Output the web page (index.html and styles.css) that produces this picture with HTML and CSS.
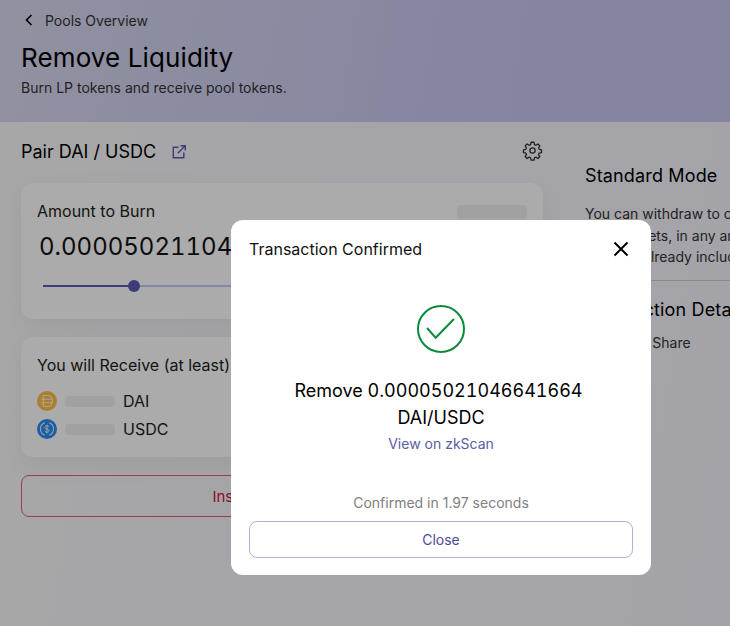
FILE: index.html
```html
<!DOCTYPE html>
<html lang="en">
<head>
<meta charset="utf-8">
<title>Remove Liquidity</title>
<link rel="stylesheet" href="styles.css">
</head>
<body>
<div class="page">
  <header class="hero">
    <a class="back">
      <svg width="16" height="16" viewBox="0 0 16 16" fill="none" stroke="#000" stroke-width="1.6"><path d="M10.500 3 5.500 8l5 5"/></svg>
      <span>Pools Overview</span>
    </a>
    <h1>Remove Liquidity</h1>
    <p>Burn LP tokens and receive pool tokens.</p>
  </header>
  <main class="columns">
    <section class="left">
      <div class="pair-row">
        <div class="pair-title">
          <h2>Pair DAI / USDC</h2>
          <svg class="ext" width="16" height="16" viewBox="0 0 16 16" fill="none" stroke="#5a5ab0" stroke-width="1.4"><path d="M7.500 3.200H2.300v10.500h10.500V8.500"/><path d="M6.800 9.200 14.200 1.800M9.600 1.700h4.700v4.700"/></svg>
        </div>
        <svg class="gear" width="21" height="21" viewBox="0 0 24 24" fill="none" stroke="#333" stroke-width="1.500" stroke-linejoin="round"><circle cx="12" cy="12" r="3"/><path d="M10.300 2.600h3.400l.5 2.700 1.700.7 2.300-1.500 2.200 2.200-1.500 2.300.7 1.700 2.700.5v3.200l-2.700.5-.7 1.700 1.500 2.300-2.200 2.200-2.300-1.500-1.700.7-.5 2.700h-3.400l-.5-2.700-1.700-.7-2.300 1.500-2.200-2.200 1.500-2.300-.7-1.700-2.700-.5v-3.200l2.700-.5.7-1.700-1.500-2.300 2.200-2.200 2.300 1.500 1.700-.7z"/></svg>
      </div>
      <div class="card burn">
        <div class="burn-head">
          <span class="label">Amount to Burn</span>
          <span class="skeleton balance"></span>
        </div>
        <div class="amount">0.00005021104</div>
        <div class="slider"><span class="fill"></span><span class="thumb"></span></div>
      </div>
      <div class="card receive">
        <div class="label">You will Receive (at least)</div>
        <div class="token-list">
          <div class="token">
            <svg width="20" height="20" viewBox="0 0 20 20"><circle cx="10" cy="10" r="10" fill="#ffbe45"/><path d="M6.300 4.500h3.900c7 0 7 11 0 11H6.300zM3.800 8.300h12.400M3.800 11.700h12.400" fill="none" stroke="#fff" stroke-opacity=".85" stroke-width="1.100"/></svg>
            <span class="skeleton amt"></span>
            <span>DAI</span>
          </div>
          <div class="token">
            <svg width="20" height="20" viewBox="0 0 20 20"><circle cx="10" cy="10" r="10" fill="#2a8cf0"/><path d="M7.800 3.800a6.600 6.600 0 0 0 0 12.400M12.200 3.800a6.600 6.600 0 0 1 0 12.400" fill="none" stroke="#fff" stroke-opacity=".85" stroke-width="1.100"/><path d="M12.200 8.200c-.3-1-1.200-1.400-2.200-1.400s-2.200.5-2.200 1.600c0 2.400 4.400 1 4.400 3.300 0 1.100-1.100 1.500-2.200 1.500s-2-.5-2.200-1.500M10 5.600v8.800" fill="none" stroke="#fff" stroke-opacity=".85" stroke-width="1"/></svg>
            <span class="skeleton amt"></span>
            <span>USDC</span>
          </div>
        </div>
      </div>
      <button class="danger">Insufficient Balance</button>
    </section>
    <aside class="right">
      <h2 class="std">Standard Mode</h2>
      <p>You can withdraw to one or both<br>in the assets, in any amount.<br>Pool fee already included.</p>
      <hr>
      <h2 class="tx">Transaction Details</h2>
      <div class="share">Your Pool Share</div>
    </aside>
  </main>
</div>
<div class="backdrop"></div>
<div class="modal">
  <div class="modal-head">
    <span>Transaction Confirmed</span>
    <svg width="16" height="16" viewBox="0 0 16 16" stroke="#000" stroke-width="2"><path d="M1.500 1.500l13 13M14.500 1.500l-13 13"/></svg>
  </div>
  <svg class="check" width="48" height="48" viewBox="0 0 48 48" fill="none" stroke="#0a8a3c" stroke-width="2"><circle cx="24" cy="24" r="23"/><path d="M10 23l8.700 9.700L37 14"/></svg>
  <div class="msg"><span class="msg-line">Remove 0.00005021046641664</span><br>DAI/USDC</div>
  <a class="scan">View on zkScan</a>
  <div class="time">Confirmed in 1.97 seconds</div>
  <button class="close">Close</button>
</div>
</body>
</html>
```
FILE: styles.css
```css
* { box-sizing: border-box; }
html, body { margin: 0; height: 100%; overflow: hidden; }
body { font-family: Inter, "Liberation Sans", sans-serif; color: #000; background: #f6f6fd; }
h1, h2, p { margin: 0; font-weight: 400; }
.page { width: 730px; height: 626px; background: linear-gradient(100deg, #fafafa, #f6f6fd 50%, #f4f4fc); }
.hero { height: 122px; padding: 12px 21px 0; background: linear-gradient(100deg, #d9d9f0, #c8c8f0 60%, #c6c6ee); }
.back { display: flex; align-items: center; gap: 8px; height: 16px; font-size: 14px; color: #333; }
.hero h1 { font-size: 26px; line-height: 32px; margin-top: 14px; letter-spacing: .12px; }
.hero p { font-size: 14px; line-height: 18px; margin-top: 5px; color: #333; }
.columns { display: flex; padding: 0 0 0 21px; gap: 42px; }
.left { width: 522px; flex: none; }
.pair-row { display: flex; align-items: center; justify-content: space-between; height: 61px; padding-bottom: 2px; }
.pair-title { display: flex; align-items: center; gap: 15px; }
.pair-title h2 { font-size: 18px; }
.gear { margin-bottom: 2px; }
.card { background: #fff; border-radius: 12px; padding: 19px 16px; box-shadow: 0 8px 24px rgba(0,0,0,.06); }
.burn { height: 136px; }
.burn-head { display: flex; justify-content: space-between; align-items: center; height: 18px; }
.label { font-size: 16px; line-height: 18px; color: #222; }
.skeleton { display: block; background: #f0f0f0; border-radius: 4px; }
.balance { width: 70px; height: 14px; transform: translateY(1px); }
.amount { font-size: 24px; line-height: 30px; margin: 12px 0 0 2px; color: #111; font-variant-numeric: tabular-nums; }
.slider { position: relative; height: 2px; margin: 23px 6px 0; background: #c8c8fa; }
.fill { display: block; width: 91px; height: 2px; background: #5a5ab8; }
.thumb { position: absolute; left: 85px; top: -5px; width: 12px; height: 12px; border-radius: 50%; background: #5a5ab8; }
.receive { height: 120px; margin-top: 18px; }
.token-list { display: flex; flex-direction: column; gap: 8px; margin-top: 17px; }
.token { display: flex; align-items: center; height: 20px; font-size: 16px; color: #222; }
.token svg { margin-right: 8px; }
.amt { width: 50px; height: 11px; margin-right: 8px; }
.danger { display: block; width: 100%; height: 42px; margin-top: 18px; background: transparent; border: 1px solid #e0607a; border-radius: 8px; color: #d0103a; font: 15px Inter, "Liberation Sans", sans-serif; }
.right { width: 300px; flex: none; padding-top: 43px; }
.std, .tx { font-size: 18px; line-height: 22px; white-space: nowrap; letter-spacing: .15px; }
.right p { font-size: 14px; line-height: 21.500px; margin-top: 16px; color: #333; white-space: nowrap; }
.right hr { margin: 12px 0 0; border: 0; border-top: 1px solid #ccc; }
.tx { margin-top: 18px; }
.share { font-size: 14px; line-height: 18px; margin-top: 13px; color: #333; }
.backdrop { position: fixed; inset: 0; background: rgba(0,0,0,.33); backdrop-filter: blur(.4px); }
.modal { position: fixed; left: 231px; top: 220px; width: 420px; height: 355px; padding: 0 18px; background: #fff; border-radius: 12px; display: flex; flex-direction: column; align-items: center; }
.modal-head { display: flex; align-items: center; justify-content: space-between; width: 100%; height: 58px; padding-right: 4px; font-size: 16px; color: #111; }
.check { margin-top: 27px; }
.msg { margin-top: 24px; font-size: 18px; line-height: 27px; text-align: center; font-variant-numeric: tabular-nums; }
.msg-line { padding-right: 5px; }
.scan { margin-top: 4px; font-size: 14px; line-height: 18px; color: #5c5ca8; }
.time { margin-top: 41px; font-size: 14px; line-height: 18px; color: #808080; }
.close { width: 384px; height: 37px; margin-top: 9px; background: #fff; border: 1px solid #b0b0dc; border-radius: 8px; color: #4a4a98; font: 400 14px Inter, "Liberation Sans", sans-serif; }
```
